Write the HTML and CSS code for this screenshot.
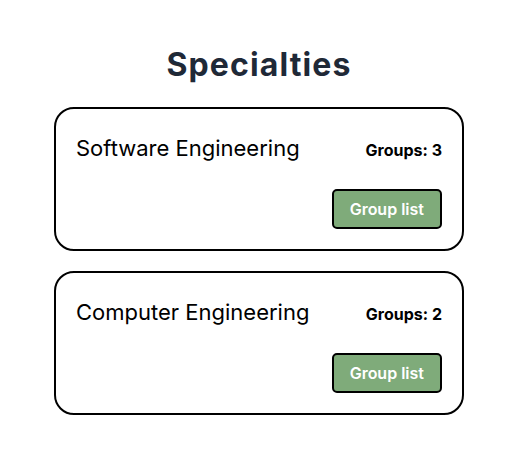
FILE: index.html
```html
<!DOCTYPE html>
<html lang="en">
<head>
<meta charset="utf-8">
<title>Specialties</title>
<link rel="stylesheet" href="styles.css">
</head>
<body>
<main class="page">
  <h1 class="title">Specialties</h1>
  <section class="list">
    <article class="card">
      <div class="card-head">
        <h2 class="card-name">Software Engineering</h2>
        <span class="card-count">Groups: 3</span>
      </div>
      <div class="card-actions">
        <button class="btn">Group list</button>
      </div>
    </article>
    <article class="card">
      <div class="card-head">
        <h2 class="card-name">Computer Engineering</h2>
        <span class="card-count">Groups: 2</span>
      </div>
      <div class="card-actions">
        <button class="btn">Group list</button>
      </div>
    </article>
  </section>
</main>
</body>
</html>
```
FILE: styles.css
```css
* { box-sizing: border-box; }
html, body { background: #ffffff; }
body {
  margin: 0;
  padding: 0 11px 0 8px;
  font-family: Inter, "Liberation Sans", sans-serif;
  color: #000;
  line-height: 1.5;
}
.page {
  width: 410px;
  margin: 0 auto;
  padding-top: 45px;
}
.title {
  margin: 0 0 22px;
  font-size: 32px;
  line-height: 40px;
  font-weight: 700;
  letter-spacing: 1.1px;
  text-align: center;
  color: #1f2937;
}
.list {
  display: flex;
  flex-direction: column;
  gap: 20px;
}
.card {
  border: 2px solid #000;
  border-radius: 20px;
  padding: 20px;
  display: flex;
  flex-direction: column;
  gap: 24px;
}
.card-head {
  display: flex;
  justify-content: space-between;
  align-items: baseline;
  padding-top: 3px;
}
.card-name {
  margin: 0;
  font-size: 22px;
  font-weight: 400;
  line-height: 33px;
}
.card-count {
  font-size: 16px;
  font-weight: 700;
}
.card-actions {
  display: flex;
  justify-content: flex-end;
}
.btn {
  font-family: inherit;
  font-size: 16px;
  font-weight: 600;
  line-height: 24px;
  color: #fff;
  background: #7fab7a;
  border: 2px solid #000;
  border-radius: 5px;
  padding: 6px 16px;
  cursor: pointer;
}
```
